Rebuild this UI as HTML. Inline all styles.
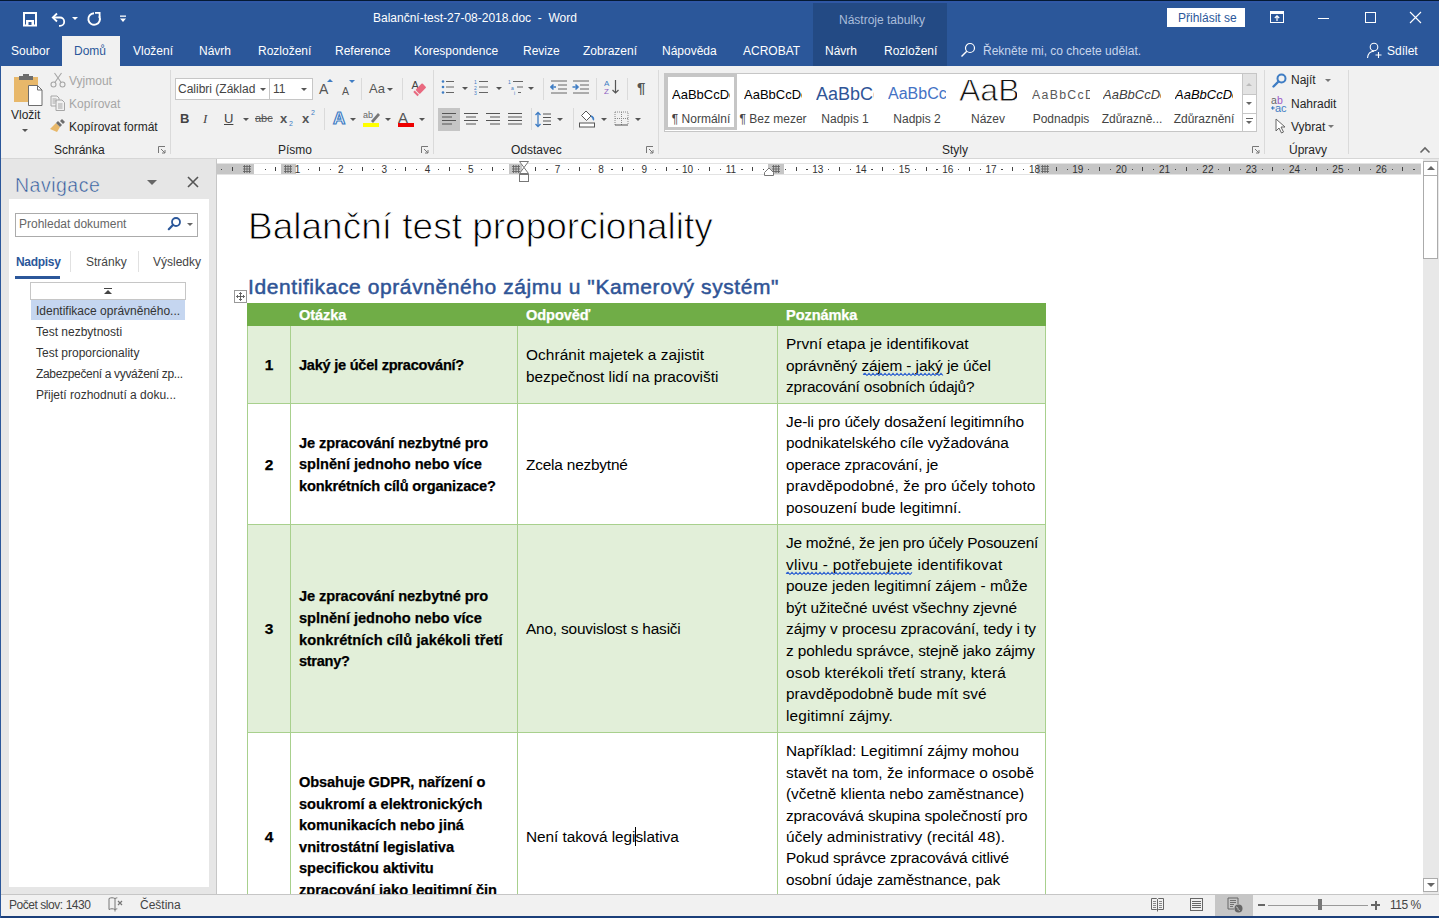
<!DOCTYPE html>
<html><head><meta charset="utf-8">
<style>
*{box-sizing:border-box}
html,body{margin:0;padding:0}
body{width:1439px;height:918px;position:relative;overflow:hidden;font-family:"Liberation Sans",sans-serif;background:#2b579a;color:#262626}
.a{position:absolute}
.t{position:absolute;white-space:nowrap;line-height:1}
#title{left:0;top:0;width:1439px;height:66px;background:#2b579a}
#ribbon{left:1px;top:66px;width:1438px;height:93px;background:#f1f1f1;border-bottom:1px solid #d6d6d6}
#nav{left:1px;top:159px;width:215px;height:735px;background:#e6e6e6}
#doc{left:216px;top:159px;width:1207px;height:735px;background:#fff;border-left:1px solid #c6c6c6}
#vscroll{left:1423px;top:159px;width:16px;height:735px;background:#e8e8e8}
#status{left:1px;top:894px;width:1438px;height:22px;background:#f1f1f1;border-top:1px solid #c6c6c6}
.tab{position:absolute;top:44px;color:#fff;font-size:12px;white-space:nowrap;line-height:14px}
.sep{position:absolute;width:1px;background:#dadada}
.grp{position:absolute;top:144px;font-size:12px;color:#262626;white-space:nowrap;line-height:12px}
.lbl{position:absolute;font-size:12px;color:#262626;white-space:nowrap;line-height:12px}
.dd{position:absolute;width:0;height:0;border-left:3px solid transparent;border-right:3px solid transparent;border-top:3px solid #555}
</style></head><body>
<!-- title bar -->
<div class="a" id="title"></div>
<div class="a" style="left:0;top:0;width:1439px;height:1px;background:#041a33"></div><div class="a" style="left:0;top:1px;width:1439px;height:2px;background:#2f57a5"></div>
<div class="a" style="left:813px;top:3px;width:134px;height:63px;background:#234a84"></div>
<div class="t" style="left:373px;top:12px;font-size:12px;color:#fff">Balanční-test-27-08-2018.doc&nbsp; - &nbsp;Word</div>
<div class="t" style="left:839px;top:13.5px;font-size:12px;color:#aabddb">Nástroje tabulky</div>


<!-- QAT icons -->
<svg class="a" style="left:22px;top:11px" width="16" height="16" viewBox="0 0 16 16"><path d="M2 2h12v12.5h-12z" fill="none" stroke="#fff" stroke-width="2"/><rect x="4" y="9" width="8" height="5" fill="#fff"/><rect x="6.5" y="11" width="3" height="3" fill="#2b579a"/></svg>
<svg class="a" style="left:51px;top:11px" width="16" height="16" viewBox="0 0 16 16"><path d="M6 2.5L1.8 6.5L6 10.5" fill="none" stroke="#fff" stroke-width="1.8"/><path d="M2 6.5h7a4.2 4.2 0 0 1 0 8.4h-1" fill="none" stroke="#fff" stroke-width="1.8"/></svg>
<div class="dd" style="left:72px;top:17px;border-top-color:#fff;border-left-width:3px;border-right-width:3px;border-top-width:3px"></div>
<svg class="a" style="left:86px;top:11px" width="16" height="16" viewBox="0 0 16 16"><path d="M8 2.2A5.8 5.8 0 1 0 13.2 5.2" fill="none" stroke="#fff" stroke-width="1.9"/><path d="M9 1.8H13.6V6.4" fill="none" stroke="#fff" stroke-width="1.8"/></svg>
<svg class="a" style="left:119px;top:15px" width="8" height="8" viewBox="0 0 8 8"><rect x="1" y="0.5" width="6" height="1.3" fill="#fff"/><path d="M1 3.5h6L4 7z" fill="#fff"/></svg>
<!-- signin & window controls -->
<div class="a" style="left:1167px;top:8px;width:78px;height:19px;background:#fff"></div>
<div class="t" style="left:1178px;top:12px;font-size:12px;color:#2b579a">Přihlásit se</div>
<svg class="a" style="left:1270px;top:10px" width="15" height="14" viewBox="0 0 15 14"><rect x="0.5" y="1.5" width="13" height="11" fill="none" stroke="#fff" stroke-width="1"/><rect x="0.5" y="1.5" width="13" height="2.5" fill="#fff"/><path d="M7 11V6M4.8 8L7 5.8L9.2 8" fill="none" stroke="#fff" stroke-width="1.2"/></svg>
<div class="a" style="left:1318px;top:18px;width:11px;height:1px;background:#fff"></div>
<div class="a" style="left:1365px;top:12px;width:11px;height:11px;border:1px solid #fff"></div>
<svg class="a" style="left:1409px;top:11px" width="13" height="13" viewBox="0 0 13 13"><path d="M1 1L12 12M12 1L1 12" stroke="#fff" stroke-width="1.1"/></svg>
<!-- tell me & share -->
<svg class="a" style="left:960px;top:42px" width="16" height="16" viewBox="0 0 16 16"><circle cx="10" cy="6" r="4.5" fill="none" stroke="#fff" stroke-width="1.2"/><path d="M6.8 9.2L1.5 14.5" stroke="#fff" stroke-width="1.4"/></svg>
<svg class="a" style="left:1366px;top:42px" width="17" height="17" viewBox="0 0 17 17"><circle cx="8" cy="5" r="3.8" fill="none" stroke="#fff" stroke-width="1.1"/><path d="M1.5 16C2 11.5 4.5 9.3 8 9.3" fill="none" stroke="#fff" stroke-width="1.1"/><path d="M12.5 10v6M9.5 13h6" stroke="#fff" stroke-width="1.1"/></svg>

<!-- tabs -->
<div class="a" style="left:62px;top:36px;width:58px;height:31px;background:#f1f1f1"></div>
<div class="tab" style="left:11px">Soubor</div>
<div class="tab" style="left:74px;color:#2b579a">Domů</div>
<div class="tab" style="left:133px">Vložení</div>
<div class="tab" style="left:199px">Návrh</div>
<div class="tab" style="left:258px">Rozložení</div>
<div class="tab" style="left:335px">Reference</div>
<div class="tab" style="left:414px">Korespondence</div>
<div class="tab" style="left:523px">Revize</div>
<div class="tab" style="left:583px">Zobrazení</div>
<div class="tab" style="left:662px">Nápověda</div>
<div class="tab" style="left:743px">ACROBAT</div>
<div class="tab" style="left:825px">Návrh</div>
<div class="tab" style="left:884px">Rozložení</div>
<div class="tab" style="left:983px;color:#c7d5ec">Řekněte mi, co chcete udělat.</div>
<div class="tab" style="left:1387px">Sdílet</div>

<!-- ribbon -->
<div class="a" id="ribbon"></div>

<!-- clipboard group -->
<svg class="a" style="left:13px;top:73px" width="31" height="33" viewBox="0 0 31 33"><rect x="1" y="4" width="24" height="25" fill="#e8b86a"/><path d="M6 3h4v-2h6v2h4v4h-14z" fill="#6d6d6d"/><path d="M15.5 12.5h9l4.5 4.5v15.5h-13.5z" fill="#fff" stroke="#6d6d6d" stroke-width="1"/><path d="M24.5 12.5v4.5h4.5" fill="none" stroke="#6d6d6d" stroke-width="1"/></svg>
<div class="lbl" style="left:11px;top:109px">Vložit</div>
<div class="dd" style="left:22px;top:129px"></div>
<svg class="a" style="left:50px;top:72px" width="16" height="16" viewBox="0 0 16 16"><circle cx="3.5" cy="12.5" r="2.5" fill="none" stroke="#a6a6a6" stroke-width="1.1"/><circle cx="12.5" cy="12.5" r="2.5" fill="none" stroke="#a6a6a6" stroke-width="1.1"/><path d="M4.8 10.5L11.5 1M11.2 10.5L4.5 1" stroke="#a6a6a6" stroke-width="1.1"/></svg>
<div class="lbl" style="left:69px;top:75px;color:#a6a6a6">Vyjmout</div>
<svg class="a" style="left:50px;top:95px" width="16" height="16" viewBox="0 0 16 16"><path d="M1 1h6l2 2v8h-8z" fill="none" stroke="#a6a6a6"/><path d="M6 5h6l2.5 2.5v8h-8.5z" fill="#f1f1f1" stroke="#a6a6a6"/><path d="M2.5 4h4M2.5 6h4M2.5 8h3M8 9h4.5M8 11h4.5M8 13h4.5" stroke="#a6a6a6"/></svg>
<div class="lbl" style="left:69px;top:98px;color:#a6a6a6">Kopírovat</div>
<svg class="a" style="left:49px;top:118px" width="18" height="16" viewBox="0 0 18 16"><path d="M1 11l6-6 4 4-3 5z" fill="#e8b86a"/><path d="M7 5l4 4 2-2-4-4z" fill="#6d6d6d"/><path d="M11 3l2-2 3 3-2 2z" fill="#6d6d6d"/></svg>
<div class="lbl" style="left:69px;top:121px">Kopírovat formát</div>
<div class="grp" style="left:54px">Schránka</div>
<svg class="a" style="left:158px;top:146px" width="8" height="8" viewBox="0 0 8 8"><path d="M0.5 7V0.5H7" fill="none" stroke="#777" stroke-width="1"/><path d="M3 3L7 7M7 4v3h-3" fill="none" stroke="#777" stroke-width="1"/></svg>
<div class="sep" style="left:170px;top:70px;height:84px"></div>

<!-- font group -->
<div class="a" style="left:175px;top:78px;width:138px;height:22px;background:#fff;border:1px solid #c6c6c6"></div>
<div class="a" style="left:269px;top:78px;width:1px;height:22px;background:#c6c6c6"></div>
<div class="lbl" style="left:178px;top:83px;color:#444">Calibri (Základ</div>
<div class="dd" style="left:260px;top:88px"></div>
<div class="lbl" style="left:273px;top:83px;color:#444">11</div>
<div class="dd" style="left:301px;top:88px"></div>
<div class="t" style="left:319px;top:82px;font-size:14px;color:#555">A</div>
<div class="a" style="left:327px;top:79px;width:0;height:0;border-left:3px solid transparent;border-right:3px solid transparent;border-bottom:3px solid #3f7dc4"></div>
<div class="t" style="left:342px;top:85.5px;font-size:10.5px;color:#555">A</div>
<div class="a" style="left:349px;top:80px;width:0;height:0;border-left:3px solid transparent;border-right:3px solid transparent;border-top:3px solid #3f7dc4"></div>
<div class="sep" style="left:361px;top:78px;height:22px"></div>
<div class="t" style="left:369px;top:82px;font-size:13px;color:#555">Aa</div>
<div class="dd" style="left:387px;top:88px"></div>
<div class="sep" style="left:402px;top:78px;height:22px"></div>
<svg class="a" style="left:409px;top:78px" width="18" height="19" viewBox="0 0 18 19"><text x="2.5" y="11" font-family="Liberation Sans" font-size="11" fill="#444">A</text><g transform="translate(11,11.5) rotate(-45)"><rect x="-3.5" y="-3" width="9.5" height="6" rx="1" fill="#e9697f"/><rect x="-6.5" y="-3" width="2" height="6" fill="#e9697f"/></g></svg>
<div class="t" style="left:180px;top:112px;font-size:13px;font-weight:bold;color:#444">B</div>
<div class="t" style="left:203px;top:112px;font-size:13px;font-style:italic;color:#444;font-family:'Liberation Serif'">I</div>
<div class="t" style="left:224px;top:112px;font-size:13px;color:#444;text-decoration:underline">U</div>
<div class="dd" style="left:243px;top:118px"></div>
<div class="t" style="left:255px;top:113px;font-size:11px;color:#555;text-decoration:line-through">abc</div>
<div class="t" style="left:280px;top:112px;font-size:13px;font-weight:bold;color:#555">x</div>
<div class="t" style="left:289px;top:120px;font-size:7px;color:#3f7dc4">2</div>
<div class="t" style="left:302px;top:112px;font-size:13px;font-weight:bold;color:#555">x</div>
<div class="t" style="left:311px;top:109px;font-size:7px;color:#3f7dc4">2</div>
<div class="sep" style="left:324px;top:108px;height:22px"></div>
<div class="t" style="left:333px;top:110px;font-size:17px;color:#fff;-webkit-text-stroke:1.2px #3f7dc4;font-weight:bold">A</div>
<div class="dd" style="left:350px;top:118px"></div>
<svg class="a" style="left:363px;top:110px" width="18" height="18" viewBox="0 0 18 18"><text x="0" y="8" font-family="Liberation Sans" font-size="9" fill="#666">ab</text><path d="M8 11l7-8 2 2-7 8z" fill="#777"/><rect x="0" y="13" width="16" height="4" fill="#ffff00"/></svg>
<div class="dd" style="left:385px;top:118px"></div>
<div class="t" style="left:398px;top:110px;font-size:15px;color:#555">A</div>
<div class="a" style="left:398px;top:123px;width:16px;height:4px;background:#e00"></div>
<div class="dd" style="left:419px;top:118px"></div>
<div class="grp" style="left:278px">Písmo</div>
<svg class="a" style="left:421px;top:146px" width="8" height="8" viewBox="0 0 8 8"><path d="M0.5 7V0.5H7" fill="none" stroke="#777" stroke-width="1"/><path d="M3 3L7 7M7 4v3h-3" fill="none" stroke="#777" stroke-width="1"/></svg>
<div class="sep" style="left:433px;top:70px;height:84px"></div>

<!-- paragraph group -->
<svg class="a" style="left:441px;top:79px" width="16" height="16" viewBox="0 0 16 16"><circle cx="2" cy="2.5" r="1.3" fill="#3f7dc4"/><circle cx="2" cy="8" r="1.3" fill="#3f7dc4"/><circle cx="2" cy="13.5" r="1.3" fill="#3f7dc4"/><path d="M5 2.5h8M5 8h8M5 13.5h8" stroke="#666" stroke-width="1"/></svg>
<div class="dd" style="left:462px;top:87px"></div>
<svg class="a" style="left:474px;top:79px" width="16" height="16" viewBox="0 0 16 16"><text x="0" y="5" font-family="Liberation Sans" font-size="5" fill="#3f7dc4">1</text><text x="0" y="10.5" font-family="Liberation Sans" font-size="5" fill="#3f7dc4">2</text><text x="0" y="16" font-family="Liberation Sans" font-size="5" fill="#3f7dc4">3</text><path d="M5 2.5h9M5 8h9M5 13.5h9" stroke="#666" stroke-width="1"/></svg>
<div class="dd" style="left:496px;top:87px"></div>
<svg class="a" style="left:508px;top:79px" width="16" height="16" viewBox="0 0 16 16"><text x="0" y="5" font-family="Liberation Sans" font-size="5" fill="#3f7dc4">1</text><text x="3" y="10.5" font-family="Liberation Sans" font-size="5" fill="#3f7dc4">a</text><text x="6" y="16" font-family="Liberation Sans" font-size="5" fill="#3f7dc4">i</text><path d="M5 2.5h10M9 8h6M10 13.5h3" stroke="#666" stroke-width="1"/></svg>
<div class="dd" style="left:528px;top:87px"></div>
<div class="sep" style="left:543px;top:78px;height:22px"></div>
<svg class="a" style="left:550px;top:79px" width="17" height="16" viewBox="0 0 17 16"><path d="M1 2h16M8 6h9M8 10h9M1 14h16" stroke="#666" stroke-width="1"/><path d="M6 8H1M3.5 5.5L1 8l2.5 2.5" fill="none" stroke="#3f7dc4" stroke-width="1.6"/></svg>
<svg class="a" style="left:572px;top:79px" width="17" height="16" viewBox="0 0 17 16"><path d="M1 2h16M8 6h9M8 10h9M1 14h16" stroke="#666" stroke-width="1"/><path d="M0.5 8h5.5M3.5 5.5L6 8l-2.5 2.5" fill="none" stroke="#3f7dc4" stroke-width="1.6"/></svg>
<div class="sep" style="left:596px;top:78px;height:22px"></div>
<svg class="a" style="left:604px;top:79px" width="17" height="16" viewBox="0 0 17 16"><text x="0" y="7" font-family="Liberation Sans" font-size="8" fill="#3f7dc4">A</text><text x="0" y="15" font-family="Liberation Sans" font-size="8" fill="#8e5fc2">Z</text><path d="M11.5 1v13M8.5 11l3 3 3-3" fill="none" stroke="#555" stroke-width="1.2"/></svg>
<div class="sep" style="left:627px;top:78px;height:22px"></div>
<div class="t" style="left:637px;top:80px;font-size:15px;color:#555;font-weight:bold">¶</div>
<div class="a" style="left:438px;top:108px;width:22px;height:23px;background:#c5c5c5"></div>
<svg class="a" style="left:441px;top:112px" width="16" height="14" viewBox="0 0 16 14"><path d="M1 1.5h14M1 5h10M1 8.5h14M1 12h10" stroke="#555" stroke-width="1"/></svg>
<svg class="a" style="left:463px;top:112px" width="16" height="14" viewBox="0 0 16 14"><path d="M1 1.5h14M3 5h10M1 8.5h14M3 12h10" stroke="#555" stroke-width="1"/></svg>
<svg class="a" style="left:485px;top:112px" width="16" height="14" viewBox="0 0 16 14"><path d="M1 1.5h14M5 5h10M1 8.5h14M5 12h10" stroke="#555" stroke-width="1"/></svg>
<svg class="a" style="left:507px;top:112px" width="16" height="14" viewBox="0 0 16 14"><path d="M1 1.5h14M1 5h14M1 8.5h14M1 12h14" stroke="#555" stroke-width="1"/></svg>
<div class="sep" style="left:531px;top:108px;height:22px"></div>
<svg class="a" style="left:535px;top:111px" width="17" height="17" viewBox="0 0 17 17"><path d="M3 1.5v14M0.5 4L3 1.5 5.5 4M0.5 13L3 15.5 5.5 13" fill="none" stroke="#3f7dc4" stroke-width="1.3"/><path d="M8 3h8M8 6.5h8M8 10h8M8 13.5h8" stroke="#555" stroke-width="1"/></svg>
<div class="dd" style="left:557px;top:118px"></div>
<div class="sep" style="left:573px;top:108px;height:22px"></div>
<svg class="a" style="left:579px;top:110px" width="18" height="18" viewBox="0 0 18 18"><path d="M7 1l5 5-4.5 4.5-5-5z" fill="#fff" stroke="#555" stroke-width="1"/><path d="M12 6c2 1 3 3 2 4" fill="none" stroke="#3f7dc4" stroke-width="1.8"/><rect x="0.5" y="13" width="15" height="4" fill="#fff" stroke="#555" stroke-width="1"/></svg>
<div class="dd" style="left:601px;top:118px"></div>
<svg class="a" style="left:614px;top:111px" width="15" height="15" viewBox="0 0 15 15"><path d="M1 1h13v13M1 1v13M7.5 1v13M1 7.5h13" fill="none" stroke="#888" stroke-width="1" stroke-dasharray="1 1"/><path d="M1 14h13" stroke="#555" stroke-width="1"/></svg>
<div class="dd" style="left:635px;top:118px"></div>
<div class="grp" style="left:511px">Odstavec</div>
<svg class="a" style="left:646px;top:146px" width="8" height="8" viewBox="0 0 8 8"><path d="M0.5 7V0.5H7" fill="none" stroke="#777" stroke-width="1"/><path d="M3 3L7 7M7 4v3h-3" fill="none" stroke="#777" stroke-width="1"/></svg>
<div class="sep" style="left:658px;top:70px;height:84px"></div>



<!-- styles gallery -->
<div class="a" style="left:664px;top:73px;width:593px;height:59px;background:#fff;border:1px solid #c6c6c6"></div>
<div class="a" style="left:665px;top:74px;width:72px;height:56px;border:3px solid #c6c6c6"></div>
<div class="a" style="left:672px;top:80px;width:58px;height:26px;overflow:hidden"><div class="t" style="left:0;top:8.0px;font-size:13px;color:#000">AaBbCcDc</div></div>
<div class="a" style="left:666px;top:112.5px;width:70px;height:14px;overflow:hidden;text-align:center;font-size:12px;line-height:12px;color:#444;white-space:nowrap">¶ Normální</div>
<div class="a" style="left:744px;top:80px;width:58px;height:26px;overflow:hidden"><div class="t" style="left:0;top:8.0px;font-size:13px;color:#000">AaBbCcDc</div></div>
<div class="a" style="left:738px;top:112.5px;width:70px;height:14px;overflow:hidden;text-align:center;font-size:12px;line-height:12px;color:#444;white-space:nowrap">¶ Bez mezer</div>
<div class="a" style="left:816px;top:80px;width:58px;height:26px;overflow:hidden"><div class="t" style="left:0;top:4.8px;font-size:18px;color:#2f5597">AaBbCc</div></div>
<div class="a" style="left:810px;top:112.5px;width:70px;height:14px;overflow:hidden;text-align:center;font-size:12px;line-height:12px;color:#444;white-space:nowrap">Nadpis 1</div>
<div class="a" style="left:888px;top:80px;width:58px;height:26px;overflow:hidden"><div class="t" style="left:0;top:5.5px;font-size:16px;color:#4472c4">AaBbCcD</div></div>
<div class="a" style="left:882px;top:112.5px;width:70px;height:14px;overflow:hidden;text-align:center;font-size:12px;line-height:12px;color:#444;white-space:nowrap">Nadpis 2</div>
<div class="a" style="left:959px;top:80px;width:58px;height:26px;overflow:hidden"><div class="t" style="left:0;top:-5.6px;font-size:32px;color:#111;-webkit-text-stroke:0.8px #fff">AaB</div></div>
<div class="a" style="left:953px;top:112.5px;width:70px;height:14px;overflow:hidden;text-align:center;font-size:12px;line-height:12px;color:#444;white-space:nowrap">Název</div>
<div class="a" style="left:1032px;top:80px;width:58px;height:26px;overflow:hidden"><div class="t" style="left:0;top:8.6px;font-size:12.3px;color:#595959;letter-spacing:1.3px">AaBbCcD</div></div>
<div class="a" style="left:1026px;top:112.5px;width:70px;height:14px;overflow:hidden;text-align:center;font-size:12px;line-height:12px;color:#444;white-space:nowrap">Podnadpis</div>
<div class="a" style="left:1103px;top:80px;width:58px;height:26px;overflow:hidden"><div class="t" style="left:0;top:8.0px;font-size:13px;color:#404040;font-style:italic">AaBbCcDc</div></div>
<div class="a" style="left:1097px;top:112.5px;width:70px;height:14px;overflow:hidden;text-align:center;font-size:12px;line-height:12px;color:#444;white-space:nowrap">Zdůrazně...</div>
<div class="a" style="left:1175px;top:80px;width:58px;height:26px;overflow:hidden"><div class="t" style="left:0;top:8.0px;font-size:13px;color:#000;font-style:italic">AaBbCcDc</div></div>
<div class="a" style="left:1169px;top:112.5px;width:70px;height:14px;overflow:hidden;text-align:center;font-size:12px;line-height:12px;color:#444;white-space:nowrap">Zdůraznění</div>
<div class="a" style="left:1242px;top:73px;width:15px;height:59px;border:1px solid #c6c6c6;background:#fff"></div>
<div class="a" style="left:1243px;top:74px;width:13px;height:20px;background:#e3e3e3"></div>
<div class="a" style="left:1246px;top:83px;width:0;height:0;border-left:3px solid transparent;border-right:3px solid transparent;border-bottom:3px solid #bbb"></div>
<div class="a" style="left:1243px;top:94px;width:13px;height:1px;background:#c6c6c6"></div>
<div class="dd" style="left:1246px;top:102px;border-top-color:#666"></div>
<div class="a" style="left:1243px;top:113px;width:13px;height:1px;background:#c6c6c6"></div>
<div class="a" style="left:1246px;top:118px;width:7px;height:1px;background:#666"></div>
<div class="dd" style="left:1246px;top:121px;border-top-color:#666"></div>
<div class="grp" style="left:942px">Styly</div>
<svg class="a" style="left:1252px;top:146px" width="8" height="8" viewBox="0 0 8 8"><path d="M0.5 7V0.5H7" fill="none" stroke="#777" stroke-width="1"/><path d="M3 3L7 7M7 4v3h-3" fill="none" stroke="#777" stroke-width="1"/></svg>
<div class="sep" style="left:1264px;top:70px;height:84px"></div>

<!-- editing -->
<svg class="a" style="left:1272px;top:73px" width="15" height="15" viewBox="0 0 15 15"><circle cx="9.5" cy="5.5" r="4" fill="none" stroke="#3f7dc4" stroke-width="2"/><path d="M6.5 8.5L1.5 13.5" stroke="#3f7dc4" stroke-width="2.4" stroke-linecap="round"/></svg>
<div class="lbl" style="left:1291px;top:74px">Najít</div>
<div class="dd" style="left:1325px;top:79px;border-top-color:#777"></div>
<svg class="a" style="left:1271px;top:95px" width="19" height="18" viewBox="0 0 19 18"><text x="0" y="8.5" font-family="Liberation Sans" font-size="10.5" fill="#666">a</text><text x="6" y="8.5" font-family="Liberation Sans" font-size="10.5" fill="#9b59c8">b</text><text x="4" y="17" font-family="Liberation Sans" font-size="11" fill="#3f7dc4">ac</text><path d="M0.8 13h3M2.2 11.5L0.8 13l1.4 1.5" fill="none" stroke="#3f7dc4" stroke-width="1.1"/></svg>
<div class="lbl" style="left:1291px;top:98px">Nahradit</div>
<svg class="a" style="left:1275px;top:118px" width="12" height="16" viewBox="0 0 12 16"><path d="M1 1v12l3-3 2.5 5 2-1-2.5-5h4z" fill="#fff" stroke="#666" stroke-width="1"/></svg>
<div class="lbl" style="left:1291px;top:121px">Vybrat</div>
<div class="dd" style="left:1328px;top:125px;border-top-color:#777"></div>
<div class="grp" style="left:1289px">Úpravy</div>
<div class="sep" style="left:1348px;top:70px;height:84px"></div>
<svg class="a" style="left:1419px;top:146px" width="12" height="8" viewBox="0 0 12 8"><path d="M1.5 6.5L6 2l4.5 4.5" fill="none" stroke="#666" stroke-width="1.6"/></svg>

<!-- nav pane -->
<div class="a" id="nav"></div>

<div class="t" style="left:15px;top:175px;font-size:19.5px;color:#2b579a;line-height:20px;letter-spacing:0.5px;-webkit-text-stroke:0.5px #e6e6e6">Navigace</div>
<div class="a" style="left:147px;top:180px;width:0;height:0;border-left:5px solid transparent;border-right:5px solid transparent;border-top:5px solid #666"></div>
<svg class="a" style="left:187px;top:176px" width="12" height="12" viewBox="0 0 12 12"><path d="M1 1L11 11M11 1L1 11" stroke="#555" stroke-width="1.6"/></svg>
<div class="a" style="left:9px;top:199px;width:200px;height:688px;background:#fff"></div>
<div class="a" style="left:15px;top:213px;width:183px;height:24px;border:1px solid #ababab;background:#fff"></div>
<div class="lbl" style="left:19px;top:218px;color:#666">Prohledat dokument</div>
<svg class="a" style="left:167px;top:216px" width="15" height="15" viewBox="0 0 15 15"><circle cx="9" cy="6" r="4" fill="none" stroke="#2b579a" stroke-width="1.8"/><path d="M6.2 8.8L1.8 13.2" stroke="#2b579a" stroke-width="2.2" stroke-linecap="round"/></svg>
<div class="dd" style="left:187px;top:223px;border-top-color:#666"></div>
<div class="lbl" style="left:16px;top:256px;font-weight:bold;color:#2b579a;letter-spacing:-0.3px">Nadpisy</div>
<div class="a" style="left:15px;top:276px;width:45px;height:3px;background:#2b579a"></div>
<div class="a" style="left:70px;top:251px;width:1px;height:21px;background:#e1e1e1"></div>
<div class="lbl" style="left:86px;top:256px;color:#444">Stránky</div>
<div class="a" style="left:138px;top:251px;width:1px;height:21px;background:#e1e1e1"></div>
<div class="lbl" style="left:153px;top:256px;color:#444">Výsledky</div>
<div class="a" style="left:30px;top:282px;width:156px;height:18px;border:1px solid #c6c6c6;background:#fff"></div>
<div class="a" style="left:104px;top:288px;width:8px;height:1px;background:#444"></div>
<div class="a" style="left:104px;top:290px;width:0;height:0;border-left:4px solid transparent;border-right:4px solid transparent;border-bottom:4px solid #444"></div>
<div class="a" style="left:31px;top:300px;width:154px;height:20px;background:#c5d6f0"></div>
<div class="lbl" style="left:36px;top:305px;color:#333">Identifikace oprávněného...</div>
<div class="lbl" style="left:36px;top:326px;color:#333">Test nezbytnosti</div>
<div class="lbl" style="left:36px;top:347px;color:#333">Test proporcionality</div>
<div class="lbl" style="left:36px;top:368px;color:#333;letter-spacing:-0.33px">Zabezpečení a vyvážení zp...</div>
<div class="lbl" style="left:36px;top:389px;color:#333">Přijetí rozhodnutí a doku...</div>


<!-- document -->
<div class="a" id="doc"></div>
<!-- DOC START -->
<div class="a" style="left:217px;top:159px;width:1206px;height:735px;overflow:hidden">
<div class="a" style="left:-217px;top:-159px;width:1439px;height:918px">
<div class="a" style="left:217px;top:163px;width:1204px;height:12px;background:#fff;border-top:1px solid #e3e3e3;border-bottom:1px solid #e3e3e3"></div>
<div class="a" style="left:217px;top:164px;width:37px;height:10px;background:#c6c6c6"></div>
<div class="a" style="left:1037px;top:164px;width:384px;height:10px;background:#c6c6c6"></div>
<div class="a" style="left:281px;top:164px;width:15px;height:10px;background:#c6c6c6"></div>
<div class="a" style="left:509px;top:164px;width:13px;height:10px;background:#c6c6c6"></div>
<div class="a" style="left:768px;top:164px;width:16px;height:10px;background:#c6c6c6"></div>
<svg class="a" style="left:243px;top:165px" width="8" height="8" viewBox="0 0 8 8"><path d="M0 1.5h8M0 4h8M0 6.5h8M1.5 0v8M4 0v8M6.5 0v8" stroke="#666" stroke-width="0.9"/></svg>
<svg class="a" style="left:284px;top:165px" width="8" height="8" viewBox="0 0 8 8"><path d="M0 1.5h8M0 4h8M0 6.5h8M1.5 0v8M4 0v8M6.5 0v8" stroke="#666" stroke-width="0.9"/></svg>
<svg class="a" style="left:512px;top:165px" width="8" height="8" viewBox="0 0 8 8"><path d="M0 1.5h8M0 4h8M0 6.5h8M1.5 0v8M4 0v8M6.5 0v8" stroke="#666" stroke-width="0.9"/></svg>
<svg class="a" style="left:772px;top:165px" width="8" height="8" viewBox="0 0 8 8"><path d="M0 1.5h8M0 4h8M0 6.5h8M1.5 0v8M4 0v8M6.5 0v8" stroke="#666" stroke-width="0.9"/></svg>
<svg class="a" style="left:1041px;top:165px" width="8" height="8" viewBox="0 0 8 8"><path d="M0 1.5h8M0 4h8M0 6.5h8M1.5 0v8M4 0v8M6.5 0v8" stroke="#666" stroke-width="0.9"/></svg>
<div class="a" style="left:221.1px;top:168.5px;width:1.3px;height:1.3px;background:#444"></div>
<div class="a" style="left:232.0px;top:167px;width:1px;height:4px;background:#444"></div>
<div class="a" style="left:264.5px;top:168.5px;width:1.3px;height:1.3px;background:#444"></div>
<div class="a" style="left:275.3px;top:167px;width:1px;height:4px;background:#444"></div>
<div class="t" style="left:287.5px;top:165px;width:20px;text-align:center;font-size:10px;line-height:10px;color:#333">1</div>
<div class="a" style="left:307.8px;top:168.5px;width:1.3px;height:1.3px;background:#444"></div>
<div class="a" style="left:318.7px;top:167px;width:1px;height:4px;background:#444"></div>
<div class="a" style="left:329.5px;top:168.5px;width:1.3px;height:1.3px;background:#444"></div>
<div class="t" style="left:330.9px;top:165px;width:20px;text-align:center;font-size:10px;line-height:10px;color:#333">2</div>
<div class="a" style="left:351.2px;top:168.5px;width:1.3px;height:1.3px;background:#444"></div>
<div class="a" style="left:362.0px;top:167px;width:1px;height:4px;background:#444"></div>
<div class="a" style="left:372.9px;top:168.5px;width:1.3px;height:1.3px;background:#444"></div>
<div class="t" style="left:374.2px;top:165px;width:20px;text-align:center;font-size:10px;line-height:10px;color:#333">3</div>
<div class="a" style="left:394.5px;top:168.5px;width:1.3px;height:1.3px;background:#444"></div>
<div class="a" style="left:405.4px;top:167px;width:1px;height:4px;background:#444"></div>
<div class="a" style="left:416.2px;top:168.5px;width:1.3px;height:1.3px;background:#444"></div>
<div class="t" style="left:417.6px;top:165px;width:20px;text-align:center;font-size:10px;line-height:10px;color:#333">4</div>
<div class="a" style="left:437.9px;top:168.5px;width:1.3px;height:1.3px;background:#444"></div>
<div class="a" style="left:448.7px;top:167px;width:1px;height:4px;background:#444"></div>
<div class="a" style="left:459.6px;top:168.5px;width:1.3px;height:1.3px;background:#444"></div>
<div class="t" style="left:460.9px;top:165px;width:20px;text-align:center;font-size:10px;line-height:10px;color:#333">5</div>
<div class="a" style="left:481.2px;top:168.5px;width:1.3px;height:1.3px;background:#444"></div>
<div class="a" style="left:492.1px;top:167px;width:1px;height:4px;background:#444"></div>
<div class="a" style="left:502.9px;top:168.5px;width:1.3px;height:1.3px;background:#444"></div>
<div class="a" style="left:524.6px;top:168.5px;width:1.3px;height:1.3px;background:#444"></div>
<div class="a" style="left:535.4px;top:167px;width:1px;height:4px;background:#444"></div>
<div class="a" style="left:546.3px;top:168.5px;width:1.3px;height:1.3px;background:#444"></div>
<div class="t" style="left:547.6px;top:165px;width:20px;text-align:center;font-size:10px;line-height:10px;color:#333">7</div>
<div class="a" style="left:567.9px;top:168.5px;width:1.3px;height:1.3px;background:#444"></div>
<div class="a" style="left:578.8px;top:167px;width:1px;height:4px;background:#444"></div>
<div class="a" style="left:589.6px;top:168.5px;width:1.3px;height:1.3px;background:#444"></div>
<div class="t" style="left:591.0px;top:165px;width:20px;text-align:center;font-size:10px;line-height:10px;color:#333">8</div>
<div class="a" style="left:611.3px;top:168.5px;width:1.3px;height:1.3px;background:#444"></div>
<div class="a" style="left:622.1px;top:167px;width:1px;height:4px;background:#444"></div>
<div class="a" style="left:633.0px;top:168.5px;width:1.3px;height:1.3px;background:#444"></div>
<div class="t" style="left:634.3px;top:165px;width:20px;text-align:center;font-size:10px;line-height:10px;color:#333">9</div>
<div class="a" style="left:654.6px;top:168.5px;width:1.3px;height:1.3px;background:#444"></div>
<div class="a" style="left:665.5px;top:167px;width:1px;height:4px;background:#444"></div>
<div class="a" style="left:676.3px;top:168.5px;width:1.3px;height:1.3px;background:#444"></div>
<div class="t" style="left:677.6px;top:165px;width:20px;text-align:center;font-size:10px;line-height:10px;color:#333">10</div>
<div class="a" style="left:698.0px;top:168.5px;width:1.3px;height:1.3px;background:#444"></div>
<div class="a" style="left:708.8px;top:167px;width:1px;height:4px;background:#444"></div>
<div class="a" style="left:719.7px;top:168.5px;width:1.3px;height:1.3px;background:#444"></div>
<div class="t" style="left:721.0px;top:165px;width:20px;text-align:center;font-size:10px;line-height:10px;color:#333">11</div>
<div class="a" style="left:741.3px;top:168.5px;width:1.3px;height:1.3px;background:#444"></div>
<div class="a" style="left:752.2px;top:167px;width:1px;height:4px;background:#444"></div>
<div class="a" style="left:763.0px;top:168.5px;width:1.3px;height:1.3px;background:#444"></div>
<div class="a" style="left:784.7px;top:168.5px;width:1.3px;height:1.3px;background:#444"></div>
<div class="a" style="left:795.5px;top:167px;width:1px;height:4px;background:#444"></div>
<div class="a" style="left:806.4px;top:168.5px;width:1.3px;height:1.3px;background:#444"></div>
<div class="t" style="left:807.7px;top:165px;width:20px;text-align:center;font-size:10px;line-height:10px;color:#333">13</div>
<div class="a" style="left:828.0px;top:168.5px;width:1.3px;height:1.3px;background:#444"></div>
<div class="a" style="left:838.9px;top:167px;width:1px;height:4px;background:#444"></div>
<div class="a" style="left:849.7px;top:168.5px;width:1.3px;height:1.3px;background:#444"></div>
<div class="t" style="left:851.0px;top:165px;width:20px;text-align:center;font-size:10px;line-height:10px;color:#333">14</div>
<div class="a" style="left:871.4px;top:168.5px;width:1.3px;height:1.3px;background:#444"></div>
<div class="a" style="left:882.2px;top:167px;width:1px;height:4px;background:#444"></div>
<div class="a" style="left:893.1px;top:168.5px;width:1.3px;height:1.3px;background:#444"></div>
<div class="t" style="left:894.4px;top:165px;width:20px;text-align:center;font-size:10px;line-height:10px;color:#333">15</div>
<div class="a" style="left:914.7px;top:168.5px;width:1.3px;height:1.3px;background:#444"></div>
<div class="a" style="left:925.6px;top:167px;width:1px;height:4px;background:#444"></div>
<div class="a" style="left:936.4px;top:168.5px;width:1.3px;height:1.3px;background:#444"></div>
<div class="t" style="left:937.8px;top:165px;width:20px;text-align:center;font-size:10px;line-height:10px;color:#333">16</div>
<div class="a" style="left:958.1px;top:168.5px;width:1.3px;height:1.3px;background:#444"></div>
<div class="a" style="left:968.9px;top:167px;width:1px;height:4px;background:#444"></div>
<div class="a" style="left:979.8px;top:168.5px;width:1.3px;height:1.3px;background:#444"></div>
<div class="t" style="left:981.1px;top:165px;width:20px;text-align:center;font-size:10px;line-height:10px;color:#333">17</div>
<div class="a" style="left:1001.4px;top:168.5px;width:1.3px;height:1.3px;background:#444"></div>
<div class="a" style="left:1012.3px;top:167px;width:1px;height:4px;background:#444"></div>
<div class="a" style="left:1023.1px;top:168.5px;width:1.3px;height:1.3px;background:#444"></div>
<div class="t" style="left:1024.5px;top:165px;width:20px;text-align:center;font-size:10px;line-height:10px;color:#333">18</div>
<div class="a" style="left:1055.6px;top:167px;width:1px;height:4px;background:#444"></div>
<div class="a" style="left:1066.5px;top:168.5px;width:1.3px;height:1.3px;background:#444"></div>
<div class="t" style="left:1067.8px;top:165px;width:20px;text-align:center;font-size:10px;line-height:10px;color:#333">19</div>
<div class="a" style="left:1088.1px;top:168.5px;width:1.3px;height:1.3px;background:#444"></div>
<div class="a" style="left:1099.0px;top:167px;width:1px;height:4px;background:#444"></div>
<div class="a" style="left:1109.8px;top:168.5px;width:1.3px;height:1.3px;background:#444"></div>
<div class="t" style="left:1111.2px;top:165px;width:20px;text-align:center;font-size:10px;line-height:10px;color:#333">20</div>
<div class="a" style="left:1131.5px;top:168.5px;width:1.3px;height:1.3px;background:#444"></div>
<div class="a" style="left:1142.3px;top:167px;width:1px;height:4px;background:#444"></div>
<div class="a" style="left:1153.2px;top:168.5px;width:1.3px;height:1.3px;background:#444"></div>
<div class="t" style="left:1154.5px;top:165px;width:20px;text-align:center;font-size:10px;line-height:10px;color:#333">21</div>
<div class="a" style="left:1174.8px;top:168.5px;width:1.3px;height:1.3px;background:#444"></div>
<div class="a" style="left:1185.7px;top:167px;width:1px;height:4px;background:#444"></div>
<div class="a" style="left:1196.5px;top:168.5px;width:1.3px;height:1.3px;background:#444"></div>
<div class="t" style="left:1197.9px;top:165px;width:20px;text-align:center;font-size:10px;line-height:10px;color:#333">22</div>
<div class="a" style="left:1218.2px;top:168.5px;width:1.3px;height:1.3px;background:#444"></div>
<div class="a" style="left:1229.0px;top:167px;width:1px;height:4px;background:#444"></div>
<div class="a" style="left:1239.9px;top:168.5px;width:1.3px;height:1.3px;background:#444"></div>
<div class="t" style="left:1241.2px;top:165px;width:20px;text-align:center;font-size:10px;line-height:10px;color:#333">23</div>
<div class="a" style="left:1261.5px;top:168.5px;width:1.3px;height:1.3px;background:#444"></div>
<div class="a" style="left:1272.4px;top:167px;width:1px;height:4px;background:#444"></div>
<div class="a" style="left:1283.2px;top:168.5px;width:1.3px;height:1.3px;background:#444"></div>
<div class="t" style="left:1284.6px;top:165px;width:20px;text-align:center;font-size:10px;line-height:10px;color:#333">24</div>
<div class="a" style="left:1304.9px;top:168.5px;width:1.3px;height:1.3px;background:#444"></div>
<div class="a" style="left:1315.7px;top:167px;width:1px;height:4px;background:#444"></div>
<div class="a" style="left:1326.6px;top:168.5px;width:1.3px;height:1.3px;background:#444"></div>
<div class="t" style="left:1327.9px;top:165px;width:20px;text-align:center;font-size:10px;line-height:10px;color:#333">25</div>
<div class="a" style="left:1348.2px;top:168.5px;width:1.3px;height:1.3px;background:#444"></div>
<div class="a" style="left:1359.1px;top:167px;width:1px;height:4px;background:#444"></div>
<div class="a" style="left:1369.9px;top:168.5px;width:1.3px;height:1.3px;background:#444"></div>
<div class="t" style="left:1371.3px;top:165px;width:20px;text-align:center;font-size:10px;line-height:10px;color:#333">26</div>
<div class="a" style="left:1391.6px;top:168.5px;width:1.3px;height:1.3px;background:#444"></div>
<div class="a" style="left:1402.4px;top:167px;width:1px;height:4px;background:#444"></div>
<div class="a" style="left:1413.3px;top:168.5px;width:1.3px;height:1.3px;background:#444"></div>
<svg class="a" style="left:518px;top:160px" width="12" height="24" viewBox="0 0 12 24"><path d="M1.5 1.5h9L6 7.5zM6 7.5L1.5 13.5h9z" fill="#fff" stroke="#777" stroke-width="1"/><rect x="1.5" y="14.5" width="9" height="7" fill="#fff" stroke="#777" stroke-width="1"/></svg>
<svg class="a" style="left:763px;top:167px" width="12" height="9" viewBox="0 0 12 9"><path d="M6 1L1.5 5.5v3h9v-3z" fill="#fff" stroke="#777" stroke-width="1"/></svg>
<div class="t" style="left:248px;top:207.7px;font-size:37px;color:#000;-webkit-text-stroke:0.9px #fff">Balanční test proporcionality</div>
<div class="t" style="left:248px;top:275.7px;font-size:21px;color:#2f5496;letter-spacing:0.59px;-webkit-text-stroke:0.5px #2f5496">Identifikace oprávněného zájmu u "Kamerový systém"</div>
<svg class="a" style="left:234px;top:290px" width="13" height="13" viewBox="0 0 13 13"><rect x="0.5" y="0.5" width="12" height="12" fill="#fff" stroke="#999"/><path d="M6.5 2.5v8M2.5 6.5h8M5 4l1.5-1.5L8 4M5 9l1.5 1.5L8 9M4 5L2.5 6.5 4 8M9 5l1.5 1.5L9 8" fill="none" stroke="#555" stroke-width="0.9"/></svg>
<div class="a" style="left:247px;top:303px;width:799px;height:23px;background:#70ad47"></div>
<div class="a" style="left:247px;top:326px;width:799px;height:77px;background:#e2efd9;border-left:1px solid #a8d08d;border-right:1px solid #a8d08d"></div>
<div class="a" style="left:247px;top:403px;width:799px;height:121px;background:#fff;border-left:1px solid #a8d08d;border-right:1px solid #a8d08d"></div>
<div class="a" style="left:247px;top:524px;width:799px;height:208px;background:#e2efd9;border-left:1px solid #a8d08d;border-right:1px solid #a8d08d"></div>
<div class="a" style="left:247px;top:732px;width:799px;height:268px;background:#fff;border-left:1px solid #a8d08d;border-right:1px solid #a8d08d"></div>
<div class="a" style="left:247px;top:403px;width:799px;height:1px;background:#a8d08d"></div>
<div class="a" style="left:247px;top:524px;width:799px;height:1px;background:#a8d08d"></div>
<div class="a" style="left:247px;top:732px;width:799px;height:1px;background:#a8d08d"></div>
<div class="a" style="left:290px;top:326px;width:1px;height:700px;background:#a8d08d"></div>
<div class="a" style="left:517px;top:326px;width:1px;height:700px;background:#a8d08d"></div>
<div class="a" style="left:777px;top:326px;width:1px;height:700px;background:#a8d08d"></div>
<div class="t" style="left:299px;top:308.1px;font-size:14.6px;font-weight:bold;-webkit-text-stroke:0.25px #fff;letter-spacing:-0.1px;color:#fff;">Otázka</div>
<div class="t" style="left:526px;top:308.1px;font-size:14.6px;font-weight:bold;-webkit-text-stroke:0.25px #fff;letter-spacing:-0.1px;color:#fff;">Odpověď</div>
<div class="t" style="left:786px;top:308.1px;font-size:14.6px;font-weight:bold;-webkit-text-stroke:0.25px #fff;letter-spacing:-0.1px;color:#fff;">Poznámka</div>
<div class="t" style="left:248px;top:356.9px;width:42px;text-align:center;font-size:15.5px;font-weight:bold;color:#000;-webkit-text-stroke:0.25px #000">1</div>
<div class="t" style="left:299px;top:357.6px;font-size:14.6px;font-weight:bold;-webkit-text-stroke:0.25px #000;letter-spacing:-0.257px;color:#000;">Jaký je účel zpracování?</div>
<div class="t" style="left:526px;top:347.4px;font-size:15.4px;letter-spacing:0.073px;color:#000;">Ochránit majetek a zajistit</div>
<div class="t" style="left:526px;top:369.0px;font-size:15.4px;letter-spacing:-0.037px;color:#000;">bezpečnost lidí na pracovišti</div>
<div class="t" style="left:786px;top:336.0px;font-size:15.4px;letter-spacing:0.077px;color:#000;">První etapa je identifikovat</div>
<div class="t" style="left:786px;top:357.6px;font-size:15.4px;letter-spacing:-0.071px;color:#000;">oprávněný zájem - jaký je účel</div>
<div class="t" style="left:786px;top:379.2px;font-size:15.4px;letter-spacing:-0.159px;color:#000;">zpracování osobních údajů?</div>
<div class="t" style="left:248px;top:456.6px;width:42px;text-align:center;font-size:15.5px;font-weight:bold;color:#000;-webkit-text-stroke:0.25px #000">2</div>
<div class="t" style="left:299px;top:435.7px;font-size:14.6px;font-weight:bold;-webkit-text-stroke:0.25px #000;letter-spacing:-0.093px;color:#000;">Je zpracování nezbytné pro</div>
<div class="t" style="left:299px;top:457.3px;font-size:14.6px;font-weight:bold;-webkit-text-stroke:0.25px #000;letter-spacing:-0.019px;color:#000;">splnění jednoho nebo více</div>
<div class="t" style="left:299px;top:478.9px;font-size:14.6px;font-weight:bold;-webkit-text-stroke:0.25px #000;letter-spacing:-0.154px;color:#000;">konkrétních cílů organizace?</div>
<div class="t" style="left:526px;top:456.7px;font-size:15.4px;letter-spacing:-0.192px;color:#000;">Zcela nezbytné</div>
<div class="t" style="left:786px;top:413.5px;font-size:15.4px;letter-spacing:-0.064px;color:#000;">Je-li pro účely dosažení legitimního</div>
<div class="t" style="left:786px;top:435.1px;font-size:15.4px;letter-spacing:-0.100px;color:#000;">podnikatelského cíle vyžadována</div>
<div class="t" style="left:786px;top:456.7px;font-size:15.4px;letter-spacing:-0.164px;color:#000;">operace zpracování, je</div>
<div class="t" style="left:786px;top:478.3px;font-size:15.4px;letter-spacing:0.115px;color:#000;">pravděpodobné, že pro účely tohoto</div>
<div class="t" style="left:786px;top:499.9px;font-size:15.4px;letter-spacing:0.004px;color:#000;">posouzení bude legitimní.</div>
<div class="t" style="left:248px;top:620.9px;width:42px;text-align:center;font-size:15.5px;font-weight:bold;color:#000;-webkit-text-stroke:0.25px #000">3</div>
<div class="t" style="left:299px;top:589.4px;font-size:14.6px;font-weight:bold;-webkit-text-stroke:0.25px #000;letter-spacing:-0.093px;color:#000;">Je zpracování nezbytné pro</div>
<div class="t" style="left:299px;top:611.0px;font-size:14.6px;font-weight:bold;-webkit-text-stroke:0.25px #000;letter-spacing:-0.019px;color:#000;">splnění jednoho nebo více</div>
<div class="t" style="left:299px;top:632.6px;font-size:14.6px;font-weight:bold;-webkit-text-stroke:0.25px #000;letter-spacing:0.083px;color:#000;">konkrétních cílů jakékoli třetí</div>
<div class="t" style="left:299px;top:654.2px;font-size:14.6px;font-weight:bold;-webkit-text-stroke:0.25px #000;letter-spacing:-0.303px;color:#000;">strany?</div>
<div class="t" style="left:526px;top:621.0px;font-size:15.4px;letter-spacing:-0.188px;color:#000;">Ano, souvislost s hasiči</div>
<div class="t" style="left:786px;top:534.9px;font-size:15.4px;letter-spacing:-0.224px;color:#000;">Je možné, že jen pro účely Posouzení</div>
<div class="t" style="left:786px;top:556.5px;font-size:15.4px;letter-spacing:0.287px;color:#000;">vlivu - potřebujete identifikovat</div>
<div class="t" style="left:786px;top:578.1px;font-size:15.4px;letter-spacing:-0.018px;color:#000;">pouze jeden legitimní zájem - může</div>
<div class="t" style="left:786px;top:599.7px;font-size:15.4px;letter-spacing:-0.052px;color:#000;">být užitečné uvést všechny zjevné</div>
<div class="t" style="left:786px;top:621.3px;font-size:15.4px;letter-spacing:-0.063px;color:#000;">zájmy v procesu zpracování, tedy i ty</div>
<div class="t" style="left:786px;top:642.9px;font-size:15.4px;letter-spacing:-0.070px;color:#000;">z pohledu správce, stejně jako zájmy</div>
<div class="t" style="left:786px;top:664.5px;font-size:15.4px;letter-spacing:0.189px;color:#000;">osob kterékoli třetí strany, která</div>
<div class="t" style="left:786px;top:686.1px;font-size:15.4px;letter-spacing:0.043px;color:#000;">pravděpodobně bude mít své</div>
<div class="t" style="left:786px;top:707.7px;font-size:15.4px;letter-spacing:0.130px;color:#000;">legitimní zájmy.</div>
<div class="t" style="left:248px;top:828.7px;width:42px;text-align:center;font-size:15.5px;font-weight:bold;color:#000;-webkit-text-stroke:0.25px #000">4</div>
<div class="t" style="left:299px;top:775.3px;font-size:14.6px;font-weight:bold;-webkit-text-stroke:0.25px #000;letter-spacing:-0.106px;color:#000;">Obsahuje GDPR, nařízení o</div>
<div class="t" style="left:299px;top:796.8px;font-size:14.6px;font-weight:bold;-webkit-text-stroke:0.25px #000;letter-spacing:-0.033px;color:#000;">soukromí a elektronických</div>
<div class="t" style="left:299px;top:818.2px;font-size:14.6px;font-weight:bold;-webkit-text-stroke:0.25px #000;letter-spacing:-0.024px;color:#000;">komunikacích nebo jiná</div>
<div class="t" style="left:299px;top:839.7px;font-size:14.6px;font-weight:bold;-webkit-text-stroke:0.25px #000;letter-spacing:0.042px;color:#000;">vnitrostátní legislativa</div>
<div class="t" style="left:299px;top:861.1px;font-size:14.6px;font-weight:bold;-webkit-text-stroke:0.25px #000;letter-spacing:-0.038px;color:#000;">specifickou aktivitu</div>
<div class="t" style="left:299px;top:882.6px;font-size:14.6px;font-weight:bold;-webkit-text-stroke:0.25px #000;letter-spacing:-0.028px;color:#000;">zpracování jako legitimní čin</div>
<div class="t" style="left:526px;top:828.8px;font-size:15.4px;letter-spacing:-0.057px;color:#000;">Není taková legislativa</div>
<div class="t" style="left:786px;top:743.3px;font-size:15.4px;letter-spacing:0.010px;color:#000;">Například: Legitimní zájmy mohou</div>
<div class="t" style="left:786px;top:764.7px;font-size:15.4px;letter-spacing:-0.003px;color:#000;">stavět na tom, že informace o osobě</div>
<div class="t" style="left:786px;top:786.1px;font-size:15.4px;letter-spacing:-0.021px;color:#000;">(včetně klienta nebo zaměstnance)</div>
<div class="t" style="left:786px;top:807.5px;font-size:15.4px;letter-spacing:-0.094px;color:#000;">zpracovává skupina společností pro</div>
<div class="t" style="left:786px;top:828.9px;font-size:15.4px;letter-spacing:0.102px;color:#000;">účely administrativy (recitál 48).</div>
<div class="t" style="left:786px;top:850.3px;font-size:15.4px;letter-spacing:-0.142px;color:#000;">Pokud správce zpracovává citlivé</div>
<div class="t" style="left:786px;top:871.7px;font-size:15.4px;letter-spacing:-0.115px;color:#000;">osobní údaje zaměstnance, pak</div>
<div class="a" style="left:635px;top:827px;width:1px;height:19px;background:#000"></div>
<svg class="a" style="left:0;top:0;overflow:visible" width="1" height="1"><path d="M863 374.5 L865 373.3 L867 375.5 L869 373.3 L871 375.5 L873 373.3 L875 375.5 L877 373.3 L879 375.5 L881 373.3 L883 375.5 L885 373.3 L887 375.5 L889 373.3 L891 375.5 L893 373.3 L895 375.5 L897 373.3 L899 375.5 L901 373.3 L903 375.5 L905 373.3 L907 375.5 L909 373.3 L911 375.5 L913 373.3 L915 375.5 L917 373.3 L919 375.5 L921 373.3 L923 375.5 L925 373.3 L927 375.5 L929 373.3 L931 375.5 L933 373.3 L935 375.5 L937 373.3 L939 375.5 L941 373.3 L943 375.5" fill="none" stroke="#2f62d0" stroke-width="1.1"/></svg>
<svg class="a" style="left:0;top:0;overflow:visible" width="1" height="1"><path d="M786 573.5 L788 572.3 L790 574.5 L792 572.3 L794 574.5 L796 572.3 L798 574.5 L800 572.3 L802 574.5 L804 572.3 L806 574.5 L808 572.3 L810 574.5 L812 572.3 L814 574.5 L816 572.3 L818 574.5 L820 572.3 L822 574.5 L824 572.3 L826 574.5 L828 572.3 L830 574.5 L832 572.3 L834 574.5 L836 572.3 L838 574.5 L840 572.3 L842 574.5 L844 572.3 L846 574.5 L848 572.3 L850 574.5 L852 572.3 L854 574.5 L856 572.3 L858 574.5 L860 572.3 L862 574.5 L864 572.3 L866 574.5 L868 572.3 L870 574.5 L872 572.3 L874 574.5 L876 572.3 L878 574.5 L880 572.3 L882 574.5 L884 572.3 L886 574.5 L888 572.3 L890 574.5 L892 572.3 L894 574.5 L896 572.3 L898 574.5 L900 572.3 L902 574.5 L904 572.3 L906 574.5 L908 572.3 L910 574.5 L912 572.3" fill="none" stroke="#2f62d0" stroke-width="1.1"/></svg>
</div></div>
<!-- DOC END -->
<div class="a" id="vscroll"></div>
<div class="a" style="left:1423px;top:161px;width:15px;height:15px;background:#fff;border:1px solid #ababab"></div>
<div class="a" style="left:1427px;top:166px;width:0;height:0;border-left:4px solid transparent;border-right:4px solid transparent;border-bottom:4px solid #666"></div>
<div class="a" style="left:1423px;top:175px;width:15px;height:84px;background:#fff;border:1px solid #ababab"></div>
<div class="a" style="left:1423px;top:878px;width:15px;height:14px;background:#fff;border:1px solid #ababab"></div>
<div class="a" style="left:1427px;top:883px;width:0;height:0;border-left:4px solid transparent;border-right:4px solid transparent;border-top:4px solid #666"></div>

<!-- status -->
<div class="a" id="status"></div>

<div class="lbl" style="left:9px;top:899px;color:#444;letter-spacing:-0.45px">Počet slov: 1430</div>
<svg class="a" style="left:108px;top:896px" width="16" height="16" viewBox="0 0 16 16"><path d="M1 2.5c2-1 4-1 6 0v11c-2-1-4-1-6 0z" fill="none" stroke="#777" stroke-width="1"/><path d="M7 2.5c.8-.4 1.5-.6 2.3-.7M7 13.5c.8-.4 1.5-.6 2.3-.7" fill="none" stroke="#777" stroke-width="1"/><path d="M7 13.5v2" stroke="#777"/><path d="M10 5l4 4M14 5l-4 4" stroke="#777" stroke-width="1.2"/></svg>
<div class="lbl" style="left:140px;top:899px;color:#444">Čeština</div>
<svg class="a" style="left:1150px;top:897px" width="15" height="16" viewBox="0 0 15 16"><path d="M1.5 1.5h5l1 1 1-1h5v11h-5l-1 1-1-1h-5z" fill="none" stroke="#666" stroke-width="1"/><path d="M7.5 2.5v12" stroke="#666" stroke-width="1"/><path d="M3 4.5h3M3 6.5h3M3 8.5h3M3 10.5h3M9 4.5h3M9 6.5h3M9 8.5h3M9 10.5h3" stroke="#888" stroke-width="1"/></svg>
<svg class="a" style="left:1189px;top:897px" width="15" height="15" viewBox="0 0 15 15"><rect x="1.5" y="1.5" width="12" height="12" fill="none" stroke="#666" stroke-width="1"/><path d="M3 4.5h9M3 6.5h9M3 8.5h9M3 10.5h9" stroke="#666" stroke-width="1"/></svg>
<div class="a" style="left:1215px;top:895px;width:38px;height:21px;background:#c6c6c6"></div>
<svg class="a" style="left:1227px;top:897px" width="16" height="16" viewBox="0 0 16 16"><path d="M1 1h10v6M1 1v11h6" fill="none" stroke="#666" stroke-width="1"/><path d="M3 3.5h6M3 5.5h6M3 7.5h4M3 9.5h3" stroke="#666" stroke-width="0.9"/><circle cx="11.5" cy="11.5" r="4" fill="#666"/><path d="M9 10c1.5 0 2 1 2 2s1 1.5 2 1.5" fill="none" stroke="#c6c6c6" stroke-width="0.9"/></svg>
<div class="a" style="left:1258px;top:904px;width:7px;height:2px;background:#666"></div>
<div class="a" style="left:1268px;top:905px;width:100px;height:1px;background:#999"></div>
<div class="a" style="left:1318px;top:899px;width:4px;height:11px;background:#777"></div>
<div class="a" style="left:1371px;top:904px;width:9px;height:2px;background:#666"></div>
<div class="a" style="left:1374.5px;top:900.5px;width:2px;height:9px;background:#666"></div>
<div class="lbl" style="left:1390px;top:899px;color:#444;letter-spacing:-0.5px">115 %</div>

<div class="a" style="left:0;top:916px;width:1439px;height:2px;background:#1b3f7a"></div>
<div class="a" style="left:0;top:66px;width:1px;height:852px;background:#2b579a"></div>
</body></html>
